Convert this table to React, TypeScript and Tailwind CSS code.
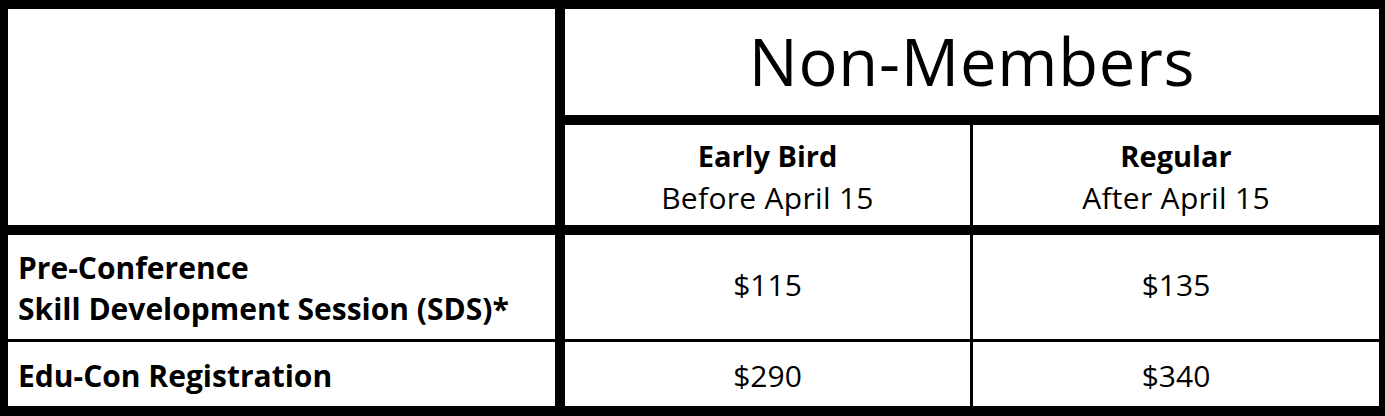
const font = { fontFamily: '"Open Sans", "Noto Sans", sans-serif' }

type Row = {
    label: string[]
    early: string
    regular: string
    height: string
    cell: string
}

const rows: Row[] = [
    { label: ["Pre-Conference", "Skill Development Session (SDS)*"], early: "$115", regular: "$135", height: "h-[107px] border-b-[3px]", cell: "pb-[6px]" },
    { label: ["Edu-Con Registration"], early: "$290", regular: "$340", height: "h-[64px]", cell: "pt-[2px]" },
]

export default function App() {
    return (
        <div className="w-[1385px] h-[416px] bg-white text-black" style={font}>
            <div className="flex flex-col w-full h-full border-black border-t-[9px] border-l-[8px] border-r-[6px] border-b-[10px]">
                {/* header */}
                <div className="flex border-b-[10px] border-black">
                    <div className="w-[557px] h-[216px] border-r-[10px] border-black"></div>
                    <div className="flex flex-col w-[814px]">
                        <div className="flex items-center justify-center h-[116px] border-b-[10px] border-black">
                            <span className="text-[65px] leading-none tracking-[0.8px] pb-[2px]">Non-Members</span>
                        </div>
                        <div className="flex h-[100px]">
                            <div className="flex flex-col items-center justify-center w-[408px] pt-[4px] border-r-[3px] border-black">
                                <span className="text-[29px] font-bold leading-[42px]">Early Bird</span>
                                <span className="text-[30px] leading-[42px] tracking-[0.3px]">Before April 15</span>
                            </div>
                            <div className="flex flex-col items-center justify-center w-[406px] pt-[4px]">
                                <span className="text-[29px] font-bold leading-[42px]">Regular</span>
                                <span className="text-[30px] leading-[42px] tracking-[0.3px]">After April 15</span>
                            </div>
                        </div>
                    </div>
                </div>
                {/* body */}
                {rows.map((r) => (
                    <div key={r.early} className={`flex border-black ${r.height}`}>
                        <div className="flex flex-col justify-center w-[557px] pl-[10px] pt-[2px] border-r-[10px] border-black">
                            {r.label.map((l) => (
                                <span key={l} className="text-[30px] font-bold leading-[41px]">{l}</span>
                            ))}
                        </div>
                        <div className={`flex items-center justify-center w-[408px] border-r-[3px] border-black ${r.cell}`}>
                            <span className="text-[30px]">{r.early}</span>
                        </div>
                        <div className={`flex items-center justify-center w-[406px] ${r.cell}`}>
                            <span className="text-[30px]">{r.regular}</span>
                        </div>
                    </div>
                ))}
            </div>
        </div>
    )
}
